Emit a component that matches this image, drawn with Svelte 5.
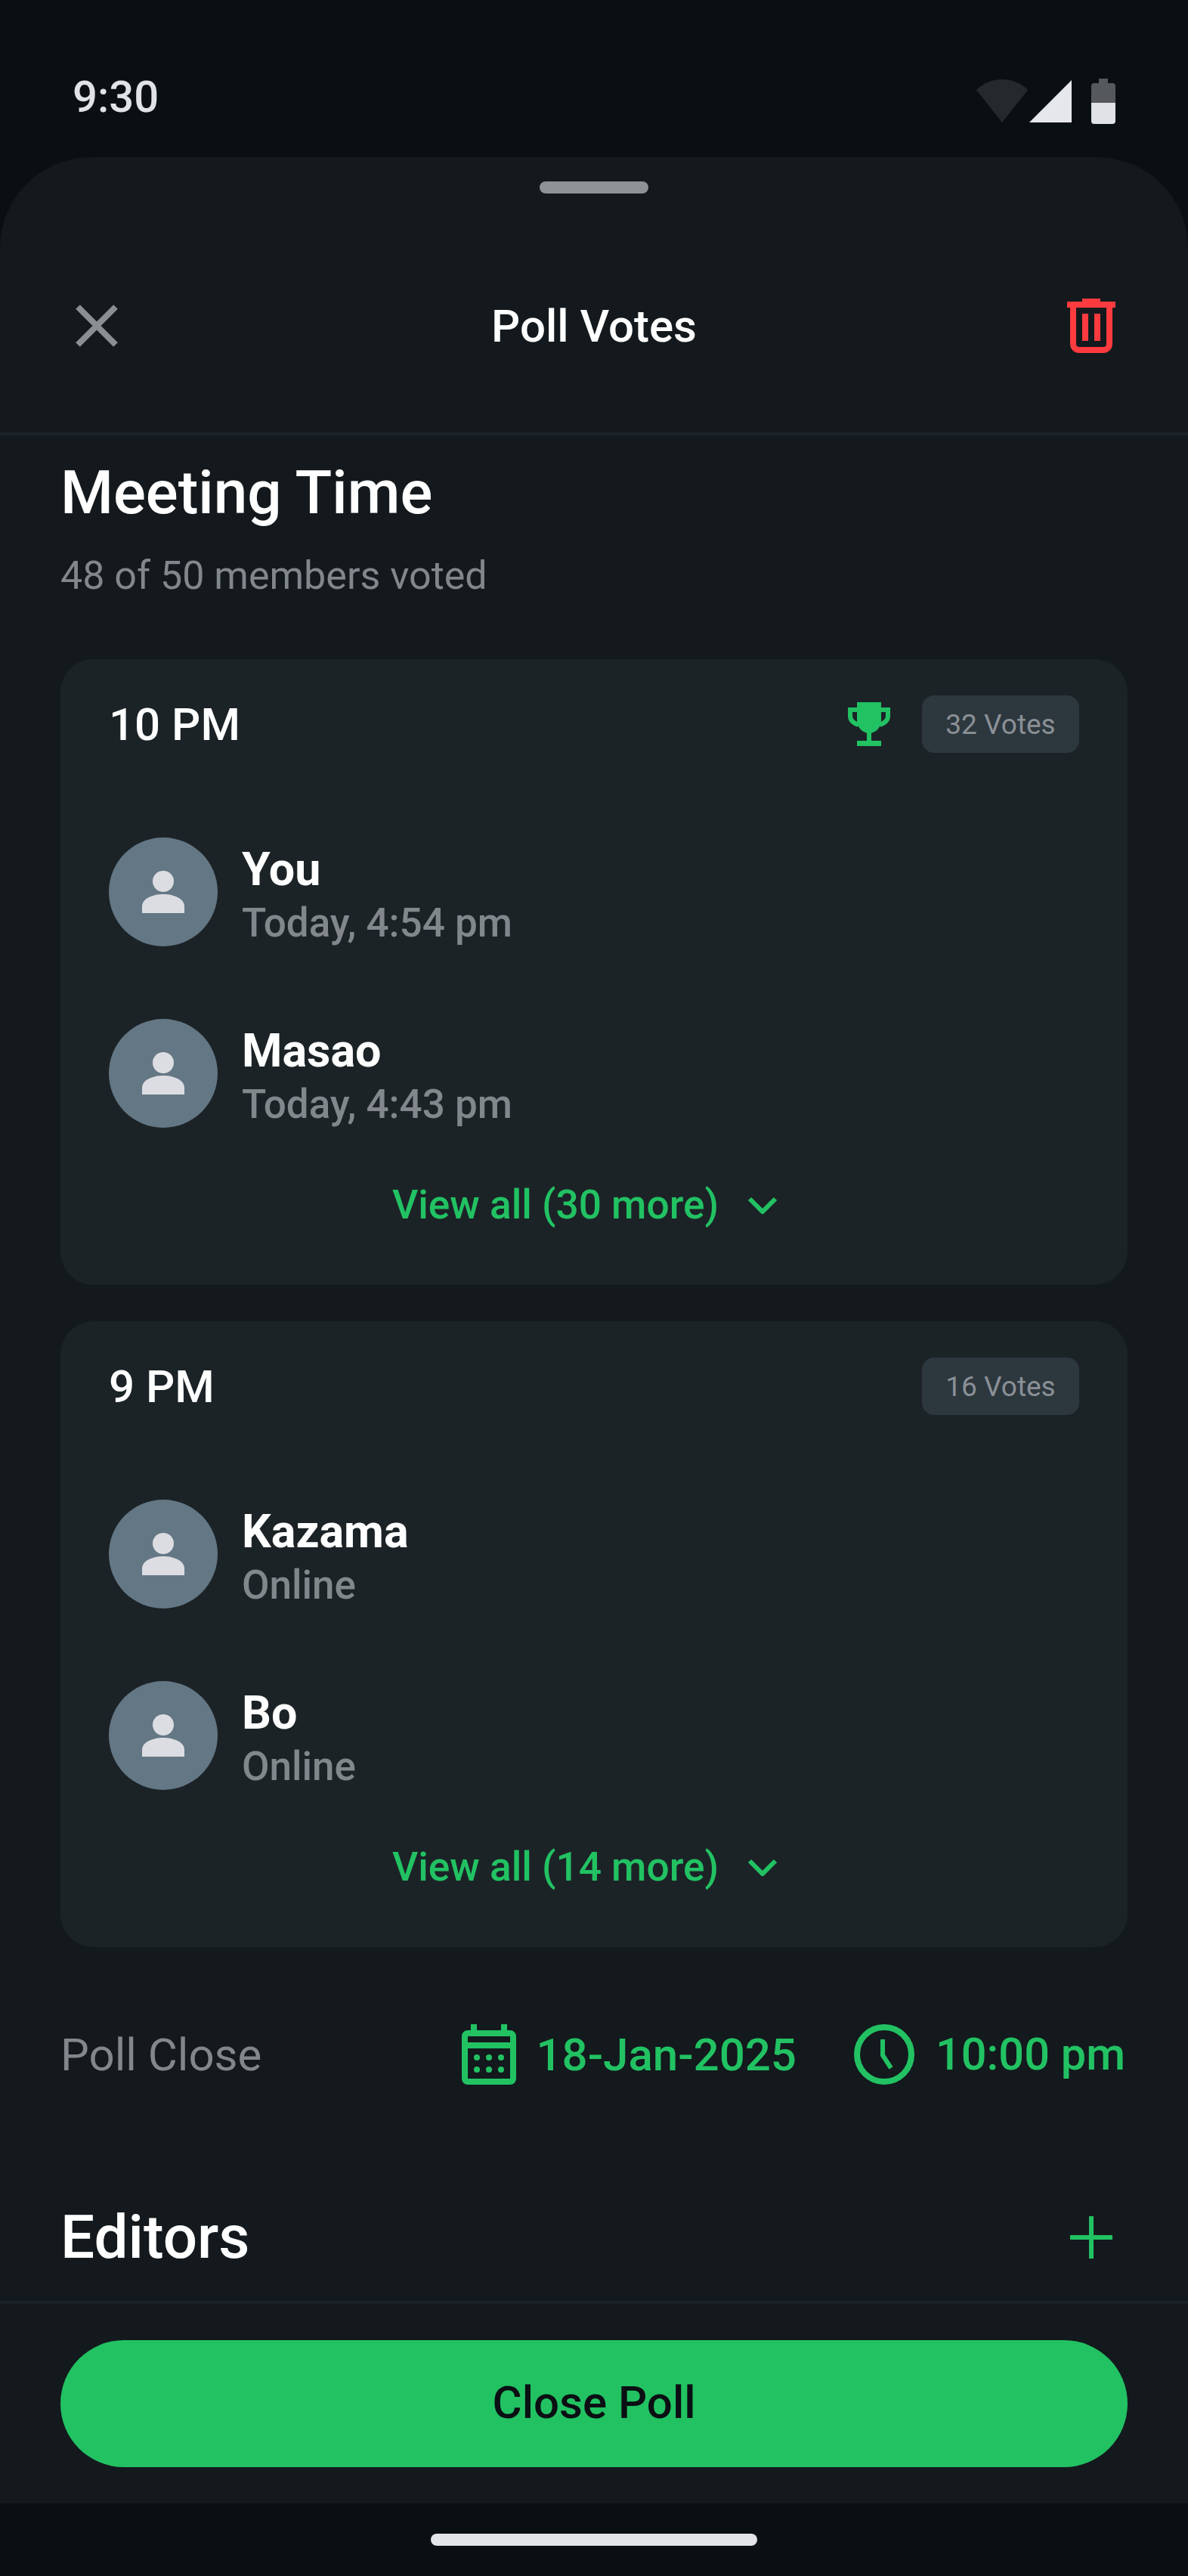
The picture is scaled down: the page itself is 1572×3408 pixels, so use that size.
<script>
  const options = [
    {
      label: '10 PM',
      votes: '32 Votes',
      winner: true,
      more: 'View all (30 more)',
      voters: [
        { name: 'You', meta: 'Today, 4:54 pm' },
        { name: 'Masao', meta: 'Today, 4:43 pm' }
      ]
    },
    {
      label: '9 PM',
      votes: '16 Votes',
      winner: false,
      more: 'View all (14 more)',
      voters: [
        { name: 'Kazama', meta: 'Online' },
        { name: 'Bo', meta: 'Online' }
      ]
    }
  ];
</script>

<div class="screen">
  <div class="status-bar">
    <span class="clock-text">9:30</span>
    <svg class="status-icons" width="184" height="60" viewBox="0 0 184 60">
      <path d="M0 15C9 6 21 1 34 1s25 5 34 14L34 58z" fill="#23292c" />
      <path d="M126 2v56H70z" fill="#e6e7ea" />
      <path d="M162 0h12v6h6a4 4 0 0 1 4 4v22h-32V10a4 4 0 0 1 4-4h6z" fill="#55585c" />
      <path d="M152 32h32v24a4 4 0 0 1-4 4h-24a4 4 0 0 1-4-4z" fill="#e0e2e5" />
    </svg>
  </div>

  <div class="sheet">
    <div class="handle"></div>
    <header class="sheet-header">
      <svg width="56" height="56" viewBox="0 0 56 56">
        <path d="M3 3l50 50M53 3L3 53" stroke="#8a8f94" stroke-width="8" fill="none" />
      </svg>
      <h1>Poll Votes</h1>
      <svg class="trash" width="64" height="72" viewBox="0 0 64 72">
        <path d="M20 0h24v4h20v8H0V4h20z" fill="#ff3b3f" />
        <path d="M8 12v48a8 8 0 0 0 8 8h32a8 8 0 0 0 8-8V12" fill="none" stroke="#ff3b3f" stroke-width="8" />
        <path d="M20 20h8v36h-8zM36 20h8v36h-8z" fill="#ff3b3f" />
      </svg>
    </header>

    <div class="content">
      <h2 class="poll-title">Meeting Time</h2>
      <p class="poll-sub">48 of 50 members voted</p>

      {#each options as opt}
        <section class="card">
          <div class="card-top">
            <span class="opt-label">{opt.label}</span>
            {#if opt.winner}
              <svg class="trophy" width="56" height="58" viewBox="0 0 56 58">
                <path d="M12 0h32v24c0 9-7 17-16 17s-16-8-16-17z" fill="#22c263" />
                <path d="M25 38h6v14h-6zM12 51h32v7H12z" fill="#22c263" />
                <path d="M14 10H3v8c0 6 5 10 11 12M42 10h11v8c0 6-5 10-11 12" fill="none" stroke="#22c263" stroke-width="6" />
              </svg>
            {/if}
            <span class="badge">{opt.votes}</span>
          </div>

          <div class="voters">
            {#each opt.voters as v}
              <div class="voter">
                <div class="avatar">
                  <svg width="56" height="56" viewBox="0 0 56 56">
                    <circle cx="28" cy="14" r="14" fill="#dcdde2" />
                    <path d="M0 56V47c0-10 14-16 28-16s28 6 28 16v9z" fill="#dcdde2" />
                  </svg>
                </div>
                <div class="voter-text">
                  <span class="voter-name">{v.name}</span>
                  <span class="voter-meta">{v.meta}</span>
                </div>
              </div>
            {/each}
          </div>

          <div class="view-all">
            <span>{opt.more}</span>
            <svg width="40" height="24" viewBox="0 0 40 24">
              <path d="M3 4l17 17L37 4" fill="none" stroke="#22c263" stroke-width="6" />
            </svg>
          </div>
        </section>
      {/each}

      <div class="close-row">
        <span class="close-label">Poll Close</span>
        <div class="close-values">
          <div class="close-item date">
            <svg width="72" height="80" viewBox="0 0 72 80">
              <path d="M12 0h8v8h32V0h8v8h4a8 8 0 0 1 8 8v56a8 8 0 0 1-8 8H8a8 8 0 0 1-8-8V16a8 8 0 0 1 8-8h4z M8 16v8h56v-8z M8 32v40h56V32z" fill="#22c263" fill-rule="evenodd" />
              <g fill="#22c263">
                <circle cx="20" cy="44" r="4" /><circle cx="36" cy="44" r="4" /><circle cx="52" cy="44" r="4" />
                <circle cx="20" cy="60" r="4" /><circle cx="36" cy="60" r="4" /><circle cx="52" cy="60" r="4" />
              </g>
            </svg>
            <span>18-Jan-2025</span>
          </div>
          <div class="close-item time">
            <svg width="80" height="80" viewBox="0 0 80 80">
              <circle cx="40" cy="40" r="36" fill="none" stroke="#22c263" stroke-width="8" />
              <path d="M38 20v21l11 17" fill="none" stroke="#22c263" stroke-width="6" />
            </svg>
            <span>10:00 pm</span>
          </div>
        </div>
      </div>

      <div class="editors-row">
        <h2>Editors</h2>
        <svg width="56" height="56" viewBox="0 0 56 56">
          <path d="M28 0v56M0 28h56" stroke="#22c263" stroke-width="6" fill="none" />
        </svg>
      </div>
    </div>

    <footer class="sheet-footer">
      <button class="close-btn">Close Poll</button>
    </footer>
  </div>

  <div class="nav-bar"><div class="home-pill"></div></div>
</div>

<style>
  :global(body) {
    margin: 0;
    background: #0a0f13;
  }
  .screen {
    width: 1572px;
    height: 3408px;
    display: flex;
    flex-direction: column;
    background: #0a0f13;
    font-family: Roboto, "Liberation Sans", sans-serif;
    overflow: hidden;
  }
  .status-bar {
    height: 208px;
    flex: none;
    box-sizing: border-box;
    padding: 0 96px 0 96px;
    display: flex;
    justify-content: space-between;
    align-items: flex-start;
  }
  .clock-text {
    margin-top: 94px;
    font-size: 58px;
    line-height: 68px;
    font-weight: 500;
    color: #e0e2e5;
  }
  .status-icons {
    margin-top: 104px;
  }
  .sheet {
    flex: 1;
    min-height: 0;
    display: flex;
    flex-direction: column;
    background: #13191d;
    border-radius: 120px 120px 0 0;
  }
  .handle {
    flex: none;
    width: 144px;
    height: 16px;
    margin: 32px auto 0;
    background: #8d9296;
    border-radius: 8px;
  }
  .sheet-header {
    flex: none;
    height: 320px;
    box-sizing: border-box;
    padding: 34px 96px 0 100px;
    display: grid;
    grid-template-columns: 1fr auto 1fr;
    align-items: center;
    border-bottom: 4px solid #1c2328;
  }
  .sheet-header h1 {
    margin: 0 4px 0 0;
    font-size: 60px;
    font-weight: 500;
    color: #fff;
  }
  .trash {
    justify-self: end;
  }
  .content {
    flex: 1;
    min-height: 0;
    overflow: hidden;
    padding: 28px 80px 0;
  }
  .poll-title {
    margin: 0;
    font-size: 80px;
    line-height: 96px;
    font-weight: 500;
    color: #fff;
  }
  .poll-sub {
    margin: 32px 0 80px;
    font-size: 52px;
    line-height: 60px;
    color: #82878c;
  }
  .card {
    box-sizing: border-box;
    height: 828px;
    margin-bottom: 48px;
    padding: 48px 64px 0;
    background: #1c2327;
    border-radius: 44px;
  }
  .card-top {
    display: flex;
    align-items: center;
    height: 76px;
  }
  .opt-label {
    flex: 1;
    font-size: 60px;
    font-weight: 500;
    color: #fff;
  }
  .trophy {
    margin-right: 42px;
  }
  .badge {
    box-sizing: border-box;
    width: 208px;
    height: 76px;
    display: flex;
    align-items: center;
    justify-content: center;
    background: #2d373e;
    border-radius: 16px;
    font-size: 37px;
    color: #8a9096;
  }
  .voters {
    margin-top: 112px;
    display: flex;
    flex-direction: column;
    gap: 96px;
  }
  .voter {
    display: flex;
    align-items: flex-start;
    gap: 32px;
    height: 144px;
  }
  .avatar {
    width: 144px;
    height: 144px;
    border-radius: 50%;
    background: #647785;
    display: flex;
    align-items: center;
    justify-content: center;
    flex: none;
  }
  .voter-text {
    display: flex;
    flex-direction: column;
    padding-top: 6px;
  }
  .voter-name {
    font-size: 61px;
    line-height: 73px;
    font-weight: 700;
    color: #fff;
  }
  .voter-meta {
    font-size: 53px;
    line-height: 69px;
    font-weight: 500;
    color: #82878c;
  }
  .view-all {
    margin-top: 70px;
    padding-right: 24px;
    display: flex;
    align-items: center;
    justify-content: center;
    gap: 38px;
    font-size: 53.2px;
    line-height: 64px;
    font-weight: 500;
    color: #22c263;
  }
  .close-row {
    margin-top: 102px;
    display: flex;
    align-items: center;
    justify-content: space-between;
    height: 80px;
  }
  .close-label {
    font-size: 60px;
    color: #82878c;
  }
  .close-values {
    display: flex;
    gap: 76px;
    padding-right: 3px;
  }
  .close-item {
    display: flex;
    align-items: center;
    font-weight: 500;
    color: #22c263;
  }
  .close-item.date {
    gap: 27px;
    font-size: 60px;
  }
  .close-item.time {
    gap: 28px;
    font-size: 59.5px;
  }
  .editors-row {
    margin-top: 162px;
    display: flex;
    align-items: center;
    justify-content: space-between;
    padding-right: 20px;
    height: 80px;
  }
  .editors-row h2 {
    margin: 0;
    font-size: 80px;
    font-weight: 500;
    color: #fff;
  }
  .sheet-footer {
    flex: none;
    box-sizing: border-box;
    height: 268px;
    padding: 48px 80px;
    border-top: 4px solid #1c2328;
  }
  .close-btn {
    display: block;
    width: 100%;
    height: 168px;
    padding: 0 0 4px;
    border: none;
    border-radius: 84px;
    background: #22c263;
    color: #0a0f13;
    font-family: inherit;
    font-size: 60px;
    font-weight: 500;
  }
  .nav-bar {
    flex: none;
    height: 96px;
    display: flex;
    justify-content: center;
  }
  .home-pill {
    width: 432px;
    height: 16px;
    margin-top: 40px;
    border-radius: 8px;
    background: #e3e4e7;
  }
</style>
